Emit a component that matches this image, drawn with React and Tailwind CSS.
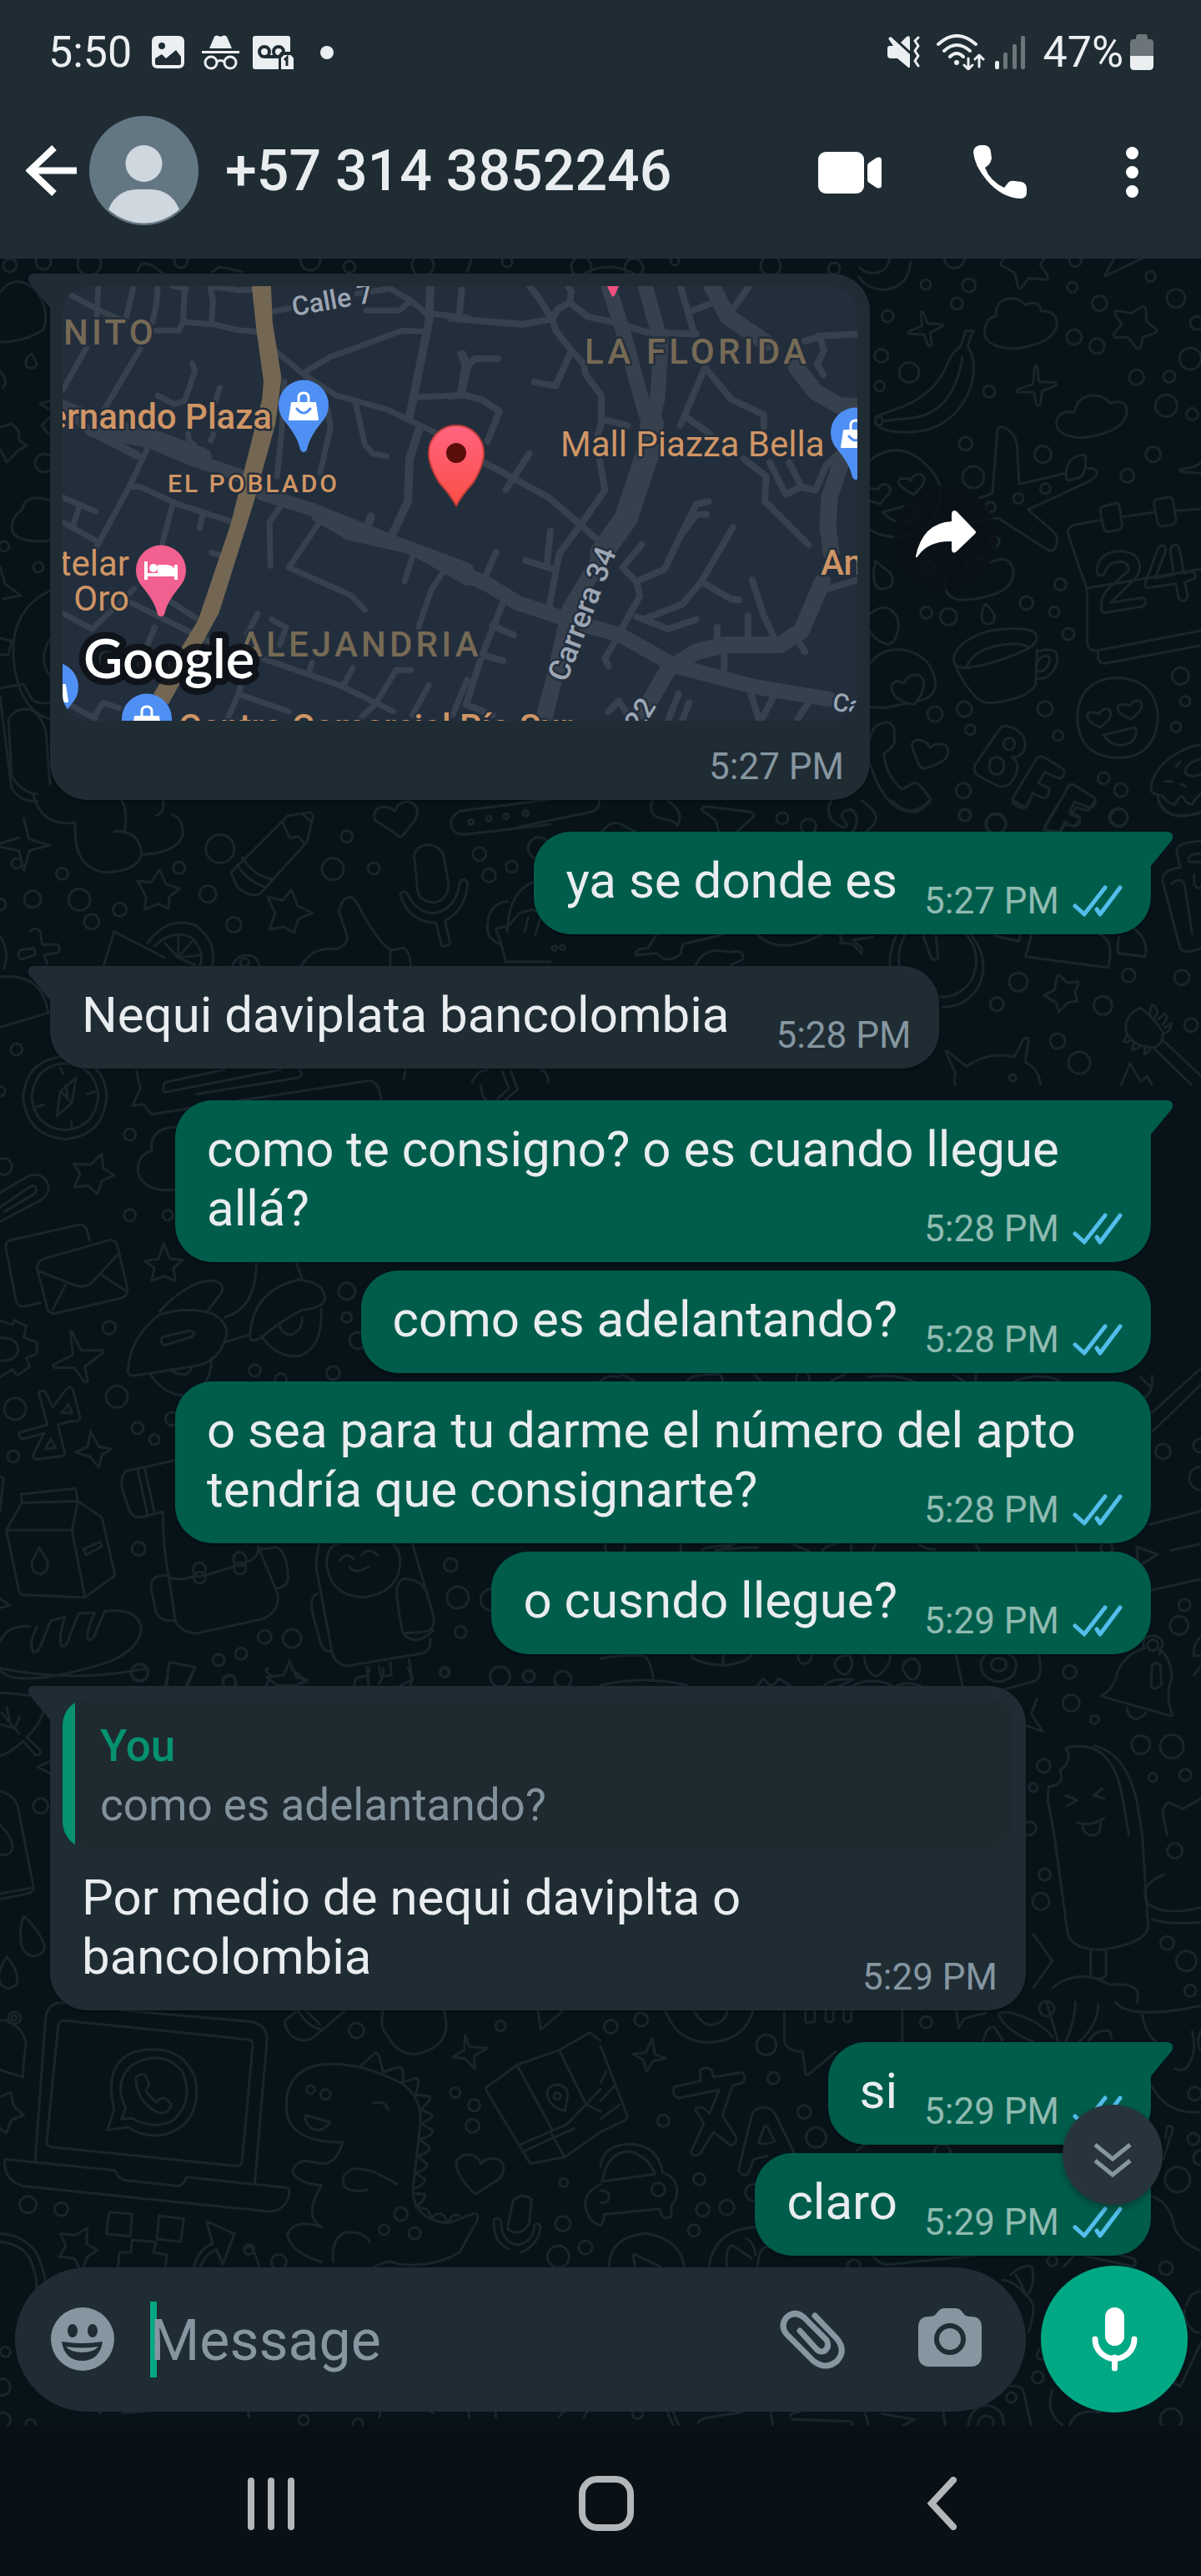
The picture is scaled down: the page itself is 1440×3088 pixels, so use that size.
import React, { useState } from "react";

// Doodles of the chat background, grouped by region of the wallpaper.
// Each region has its own origin and scale; dots are [x, y, radius].
const doodleRegions = [
    {
        ox: 1030, oy: 305, sx: 1 / 3, sy: 1 / 2.24,
        paths: [
            // shell
            "M0 60Q30 95 95 95Q180 85 185 20M0 35Q30 55 70 48Q105 40 110 10",
            // stars
            "M510 28L560 50L572 88Q578 94 585 88L610 64L670 68Q685 66 676 54L652 28L675 0M510 28Q505 20 540 0",
            "M920 160Q920 150 935 152L978 158L1018 140Q1032 138 1032 150L1034 180L1068 200Q1078 208 1062 212L1022 222L1012 248Q1005 258 996 250L966 222L922 224Q910 220 922 208L945 188Z",
            "M885 55L925 0M885 58L1020 10",
            // sparkles
            "M222 155Q230 150 236 165L246 185L300 188Q310 190 295 195L255 210L262 240Q258 250 248 244L234 215L180 213Q172 210 185 205L226 192Z",
            "M632 300Q638 292 642 305L646 342L705 344Q714 348 704 354L658 366L652 402Q644 410 638 402L628 370L572 370Q562 366 574 362L626 348Z",
            // clouds
            "M492 165Q490 118 550 118Q580 118 598 136Q645 120 656 152Q715 152 712 190Q700 240 560 253Q450 250 452 208Q455 170 492 165Z",
            "M775 424Q785 380 845 378Q885 380 902 400Q960 385 964 422Q955 480 800 492Q710 490 710 450Q715 418 775 424Z",
            "M378 848Q390 812 440 816Q460 818 468 828Q550 800 556 856Q550 920 370 928Q310 925 310 885Q320 845 378 848Z",
            // banana
            "M384 205H410L390 246Q430 290 400 360Q340 470 190 477Q90 480 60 455Q50 435 80 430L160 408Q280 370 320 290Q335 262 365 248ZM372 275Q340 430 180 440L82 447M60 447a12 12 0 1 0 24 0a12 12 0 1 0-24 0",
            // heart eyes face
            "M40 552Q130 500 220 550Q300 600 295 650Q280 740 160 758Q90 762 40 740M142 615Q140 600 160 602Q180 600 185 608Q200 585 225 592Q245 600 225 622L198 645Q160 632 142 615ZM40 628Q62 630 68 632Q80 610 105 620Q120 630 105 645L75 670L40 662M85 692L200 668Q215 670 212 690Q200 720 155 722Q110 715 85 692Z",
            "M785 1245Q790 1140 930 1137Q1070 1142 1075 1245Q1065 1350 930 1352Q790 1348 785 1245ZM820 1240Q822 1228 845 1230Q858 1232 862 1234Q880 1215 900 1222Q912 1235 895 1252L868 1270Q825 1258 820 1240ZM930 1220Q932 1208 952 1208Q970 1210 974 1212Q990 1192 1012 1200Q1025 1212 1008 1228L980 1248Q938 1238 930 1220ZM880 1290L990 1270Q998 1270 997 1285Q990 1315 940 1318Q900 1315 880 1290Z",
            // plane
            "M430 655L480 642L497 475Q500 460 520 464Q560 475 568 510L576 617L740 588M745 600Q740 560 775 545Q818 530 815 550Q818 590 790 600L760 606Q745 608 745 600ZM812 575Q860 570 855 592Q845 602 820 612L608 685L700 745Q720 765 710 780Q700 800 682 795L500 708L360 725",
            // drops
            "M58 825Q56 820 66 828L112 855Q130 875 112 892Q80 905 60 890Q46 870 58 825ZM455 938Q442 950 441 975Q445 995 468 992Q492 988 486 968Q478 955 455 938Z",
            // calendar
            "M1230 683L1140 688M1060 692L945 705M865 714L775 726Q745 735 752 752L820 900V1040Q825 1065 855 1064L1230 1010M860 1066V1085Q865 1100 885 1098L1230 1050M820 896L1230 845M868 690Q866 680 880 676L925 668Q938 670 938 682L946 724Q946 736 932 740L895 745Q882 744 880 734ZM1060 670Q1060 660 1075 657L1115 652Q1128 652 1130 664L1140 712Q1138 725 1124 726L1090 730Q1076 730 1074 718Z",
            "M855 850Q860 798 940 797Q1010 800 1010 840Q1010 860 980 880L905 935L1015 922Q1032 922 1030 935Q1028 944 1015 946L885 962Q870 962 872 945Q870 915 900 895L970 848Q970 825 935 825Q895 828 886 850Q880 865 868 862Q856 862 855 850ZM1075 790Q1085 778 1100 784Q1106 792 1100 802L1065 870L1132 860L1120 795Q1120 782 1135 780Q1150 780 1152 792L1170 856L1200 852Q1215 856 1208 870L1172 880L1182 915Q1180 930 1165 930Q1150 930 1148 918L1140 884L1040 895Q1024 895 1030 880Z",
            // cup
            "M340 1085Q350 1040 460 1012Q600 995 635 1018Q650 1040 610 1058Q500 1098 390 1110Q340 1112 340 1085ZM388 1106Q410 1060 520 1048Q590 1042 610 1056M345 1102Q370 1150 420 1188Q445 1210 500 1202Q610 1190 635 1155L640 1060M638 1070Q660 1058 700 1064Q725 1075 705 1110Q680 1145 636 1138M638 1112Q635 1085 668 1078Q690 1078 685 1095Q670 1122 645 1120Q636 1118 638 1112Z",
            // helmet with heart
            "M40 1098Q80 1055 160 1062Q260 1075 275 1150Q275 1190 215 1198M40 1215L90 1218L170 1206M118 1170Q112 1148 140 1146Q155 1148 160 1152Q180 1125 215 1130Q240 1140 230 1165Q222 1190 198 1208Q130 1200 118 1170ZM40 965Q80 940 110 952Q145 970 142 1000Q135 1040 105 1047Q60 1040 40 1012",
            // phone
            "M40 1300Q45 1260 100 1256Q125 1262 126 1275L128 1310Q120 1325 90 1340Q95 1400 155 1436L195 1420Q210 1418 222 1428L255 1460Q260 1470 240 1480Q220 1498 190 1497Q110 1495 60 1410L40 1370",
            "M192 1325Q185 1305 215 1303Q248 1308 256 1325Q275 1308 312 1318Q330 1335 310 1355Q290 1368 238 1380Q225 1382 215 1370Z",
            // lettering
            "M505 1275Q515 1262 540 1268Q600 1282 598 1320Q590 1350 550 1350Q580 1365 565 1395Q540 1435 500 1428L430 1400Q410 1390 416 1372ZM520 1314a20 16 0 1 0 40 0a20 16 0 1 0-40 0M470 1373a26 18 0 1 0 50 0a26 18 0 1 0-50 0",
            "M640 1352Q650 1345 665 1350L735 1382Q742 1390 735 1400Q725 1410 710 1404L668 1390L645 1420L682 1432Q688 1445 676 1456Q665 1462 650 1456L625 1446L605 1480Q590 1490 575 1484L555 1474Q548 1466 556 1456ZM755 1426Q762 1420 775 1425L845 1458Q855 1468 846 1478Q835 1488 822 1484L775 1470L758 1496L790 1508Q800 1518 790 1530Q780 1538 765 1534L740 1524L722 1550L665 1545Z",
            // donut
            "M1230 1315Q1120 1335 1070 1390Q1040 1430 1055 1445Q1080 1455 1090 1452Q1110 1475 1135 1478Q1155 1450 1165 1455Q1180 1480 1200 1475Q1210 1460 1230 1448M1075 1455Q1080 1495 1130 1505Q1180 1510 1230 1500M1230 1355Q1175 1365 1172 1390Q1190 1408 1230 1395M1140 1375L1155 1362M1100 1415L1125 1415M1158 1422L1175 1428",
            "M1230 560Q1200 575 1160 576Q1145 580 1165 584L1230 588",
        ],
        dots: [
            [240, 81, 6], [395, 83, 8], [352, 132, 7], [103, 166, 7], [80, 272, 8], [180, 317, 12], [74, 354, 6], [468, 368, 7], [383, 508, 8],
            [343, 10, 12], [778, 17, 7], [767, 88, 6], [865, 131, 9], [774, 222, 9], [856, 246, 9], [1049, 59, 6], [1140, 118, 11], [1215, 184, 8],
            [1192, 280, 13], [998, 330, 9], [1116, 328, 7], [1105, 406, 13], [1198, 429, 7], [1058, 537, 9], [965, 594, 8], [661, 537, 10],
            [411, 598, 13], [573, 655, 6], [670, 629, 6], [473, 678, 6], [487, 771, 6], [248, 842, 9], [242, 962, 7], [322, 973, 10], [602, 936, 8],
            [724, 886, 7], [702, 960, 6], [753, 1019, 7], [1156, 1132, 10], [1173, 1200, 6], [1140, 1269, 6], [273, 1234, 9], [379, 1221, 9],
            [400, 1276, 6], [669, 1220, 9], [716, 1292, 6], [375, 1440, 9], [381, 1505, 7], [491, 1530, 12], [880, 1406, 7], [942, 1438, 8], [933, 1512, 11],
        ],
    },
    {
        ox: 0, oy: 950, sx: 1 / 2.376, sy: 1 / 1.4385,
        paths: [
            "M95 5Q120 60 215 52M215 52Q205 130 300 138Q400 135 403 103Q395 65 325 67M355 67Q365 30 345 12M403 107Q500 105 520 75Q525 45 490 38M445 40Q470 35 465 15",
            "M68 45L82 80L142 91L84 100L68 135L54 100L0 94M0 88L54 78Z",
            // pencil
            "M658 138L820 40L885 34L892 40L875 85L740 175Q710 182 675 162ZM675 124Q700 150 752 163M690 112Q720 142 775 150M805 52L825 78L850 76L868 88M860 36L886 50",
            "M1068 48Q1060 25 1095 25Q1115 25 1125 32Q1140 10 1175 18Q1200 30 1180 50L1150 72Q1140 80 1130 72Z",
            "M1310 32L1568 12M1310 32Q1275 45 1288 62Q1300 74 1330 72L1568 55",
            // stars
            "M392 152L430 155L455 133L472 158L512 166L482 180L480 200L450 192L412 202L416 180Z",
            "M762 180L806 186L830 168L848 195L890 208L850 218L838 242L810 232L768 236L784 208Z",
            "M210 640L258 642L290 623L294 648L325 660L290 670L278 692L250 678L212 680L228 658Z",
            "M412 808L452 804L466 778L484 804L520 806L494 820L500 842L468 834L432 842L440 820Z",
            "M760 1525L808 1522L825 1498L845 1526L874 1530L840 1540H790Z",
            // microphone
            "M1180 110Q1185 90 1225 90Q1262 95 1266 115L1278 160Q1275 185 1238 190Q1195 188 1190 170ZM1140 175Q1155 165 1165 180Q1190 208 1240 208Q1300 200 1310 155Q1320 145 1332 155Q1330 200 1268 222L1282 260Q1270 268 1258 264L1242 225Q1160 222 1140 175Z",
            // thumb
            "M860 298Q890 265 960 270Q990 262 990 250L965 205Q975 180 1000 180Q1015 185 1030 205Q1080 260 1115 272L1150 268Q1168 275 1170 298M1112 272V298",
            // whisk and citrus
            "M85 240Q100 230 115 240L120 262L165 262Q175 270 165 276L125 280L135 295M100 280L60 288Q45 280 58 272L98 268ZM325 240L295 300M325 240L470 285M420 260Q480 210 560 230Q620 260 605 298M440 265Q490 235 545 250Q585 275 570 298M508 285V245M508 285L545 258M508 285L572 280M508 285L470 260M508 285L555 297",
            "M0 248Q30 275 10 305M0 318Q120 310 138 380L0 405M662 298Q680 275 720 282Q738 290 738 298M1390 220Q1400 190 1445 188M1445 240Q1450 150 1568 150M1412 235L1448 230L1480 208L1515 202L1568 215M1412 235Q1430 260 1440 292H1568M1495 240L1505 215M1525 245L1540 215M1390 225Q1380 250 1425 262",
            // compass
            "M66 525Q75 460 185 455Q300 462 304 525Q295 592 185 598Q75 592 66 525ZM90 525Q100 470 185 467Q275 472 280 525Q270 578 185 582Q100 578 90 525ZM216 492L205 535L162 558L172 515ZM172 515L205 535M172 475L180 485M270 516L248 520M205 580L203 568M105 542L125 538M188 505L192 525",
            // notes
            "M378 540L400 510L388 480M378 540L410 538L430 555L1050 497Q1080 497 1086 530M470 500L640 478M470 517L800 478M470 500Q460 512 470 517M850 478Q870 485 850 492L560 520M1150 495L1155 480M1345 500Q1360 478 1390 478M1562 500Q1560 480 1540 478M1370 505Q1372 525 1385 530M1430 480L1450 510L1418 528M1455 480L1475 512L1440 530",
            "M498 577Q425 580 432 618Q390 625 393 655Q410 690 498 685M0 690L85 660Q130 655 138 680Q140 695 110 705L0 740M0 715L85 680Q100 675 104 684Q100 692 90 695L15 722",
            // envelopes
            "M255 772L248 755Q240 742 220 746L30 772Q12 775 18 790L45 875Q50 888 70 886L115 880M105 820Q108 808 125 804L310 772Q330 770 336 785L363 855Q365 868 345 872L160 898Q140 900 135 890ZM108 825L215 850Q240 855 260 846L338 795M150 892L188 848M360 860L290 832",
            // saucer
            "M455 895Q530 845 600 842Q640 842 632 862L590 895M365 995Q370 940 455 900Q540 885 610 900Q660 920 640 945Q620 985 545 990L390 1005Q360 1008 365 995ZM460 945Q455 940 470 938L540 928Q560 930 548 938L475 952Q460 955 460 945ZM730 812Q730 890 640 905M712 940Q715 860 850 840Q930 845 925 875Q915 890 860 892Q790 915 745 940Q712 950 712 940ZM860 838L845 812M745 938Q790 975 850 972Q920 960 915 890M795 915Q800 935 830 935Q865 925 860 905M640 948L710 935M430 1005Q470 1040 530 1040Q605 1025 602 975M485 995Q500 1005 530 1003Q550 995 545 990",
            // gear
            "M0 910L35 918L42 910L75 920L68 940L105 948V968L75 975L85 990L50 1005L35 995L0 1008M0 940Q50 940 52 960Q50 980 0 980",
            "M200 930Q205 925 212 940L232 962L290 962Q300 965 285 970L242 990L250 1015Q245 1020 235 1012L212 992L155 992Q145 988 158 985L208 970Z",
            "M258 1102Q265 1110 282 1128L318 1132L290 1142L282 1164L256 1145L215 1138L250 1128Z",
            // letters
            "M110 1035Q120 1028 130 1035L150 1060L190 1028Q200 1022 208 1030L228 1078Q225 1086 205 1084L165 1090L185 1140Q180 1145 165 1145L100 1150Q90 1145 98 1138L125 1105L65 1115Q50 1110 55 1104L135 1090ZM175 1070L195 1055L205 1070ZM128 1132L145 1115L158 1130Z",
            // milk
            "M60 1210L215 1200L222 1222L62 1225ZM62 1225L18 1272L205 1272L222 1222L290 1250L328 1350L242 1388L205 1272M18 1272L55 1380Q60 1385 75 1384L242 1388M112 1302L135 1325Q140 1345 115 1348Q85 1345 92 1325ZM238 1305L285 1292L290 1300L245 1315ZM0 1180L10 1182L0 1240",
            // backpack
            "M498 1152L360 1170Q340 1180 350 1205L370 1240Q380 1250 400 1250L465 1240M392 1168L420 1245M412 1165L440 1242M465 1240Q462 1290 480 1350L500 1430Q520 1450 560 1450L750 1425Q800 1410 790 1380L735 1300M472 1350Q500 1362 550 1352M585 1350L665 1335M700 1328Q740 1320 735 1300M550 1340a18 12 0 1 0 36 0a18 12 0 1 0-36 0M552 1354a17 10 0 1 0 34 0a17 10 0 1 0-34 0M665 1322a18 12 0 1 0 36 0a18 12 0 1 0-36 0M667 1338a17 10 0 1 0 34 0a17 10 0 1 0-34 0M472 1350Q430 1350 430 1370L445 1415Q460 1430 495 1428M740 1305L790 1302Q815 1310 820 1345Q825 1370 790 1372",
            // astronaut
            "M910 1296Q895 1330 905 1350L945 1480Q955 1505 990 1506L1200 1485Q1230 1480 1225 1460M930 1325Q935 1300 960 1296M930 1325Q935 1385 1035 1388Q1140 1380 1140 1325Q1138 1305 1120 1296M968 1325Q985 1308 1008 1322M1030 1315Q1050 1300 1075 1315M995 1335Q1010 1350 1050 1335M905 1382Q880 1385 892 1420L915 1470Q930 1485 945 1480M1175 1296L1235 1420Q1242 1445 1210 1447L1150 1450Q1140 1440 1130 1380Q1130 1355 1160 1356Q1200 1360 1205 1370M1150 1450Q1180 1475 1235 1445M1045 1508L1050 1540M1080 1508L1085 1525L1115 1522L1112 1500M1165 1495L1175 1530L1140 1540",
            // bread
            "M0 1465Q20 1435 85 1438M105 1438Q80 1470 95 1482Q110 1485 120 1465L145 1428M145 1428L185 1422M185 1422Q165 1460 175 1472Q190 1475 200 1452L225 1415H270Q245 1445 250 1460Q265 1465 275 1445L298 1412Q400 1405 402 1445Q390 1490 250 1510Q100 1535 30 1525L0 1515M482 1500L475 1540M482 1500L555 1508L530 1540M0 1390L28 1402L0 1406",
        ],
        dots: [
            [177, 140, 7], [93, 184, 10], [0, 193, 7], [226, 185, 13], [261, 223, 9], [341, 202, 8], [510, 130, 7], [627, 97, 17], [592, 175, 10], [666, 228, 9],
            [948, 132, 13], [988, 76, 7], [1065, 131, 7], [1366, 106, 8], [1393, 143, 8], [1458, 128, 7], [1342, 51, 3], [1392, 45, 3], [1442, 41, 3], [1496, 36, 3],
            [47, 443, 7], [0, 515, 6], [370, 590, 7], [10, 645, 10], [370, 729, 7], [478, 729, 6], [311, 923, 8], [988, 860, 10], [988, 905, 6], [1020, 945, 10],
            [43, 1063, 13], [333, 1042, 13], [38, 1145, 7], [392, 1096, 7], [440, 1116, 6], [726, 997, 7], [949, 1001, 8], [490, 1080, 8], [800, 1012, 7],
            [395, 1304, 8], [1284, 1332, 8], [1304, 1388, 13], [1400, 1392, 13], [1312, 1448, 7], [754, 1456, 8], [832, 1459, 11], [687, 1485, 7], [623, 1496, 7], [398, 1517, 10],
            [654, 1535, 8], [1267, 1517, 6], [1424, 1525, 12], [1507, 1524, 7], [697, 293, 5],
        ],
    },
    {
        ox: 0, oy: 2000, sx: 1 / 2.178, sy: 1 / 2.24,
        paths: [
            "M0 0Q200 40 380 0M440 0L432 45M510 0L490 45M700 0Q685 0 708 20L695 45M760 0L802 35L770 45M965 0L960 20L930 25L925 45M1065 0Q1080 20 1072 45M1000 0Q1005 20 990 40",
            // leaf
            "M0 65L75 72M115 95Q115 140 70 185L105 220Q108 235 92 232L60 195Q30 225 0 235M5 120L50 175M18 105L25 140M52 130L38 160M0 150L35 160M130 250L98 264L130 282",
            "M0 330Q45 340 50 390L88 590Q88 600 75 604L0 620M80 590L0 605M0 420Q40 460 30 490Q20 505 0 500",
            "M62 665Q50 690 55 740Q65 775 95 772Q120 765 115 740Q100 700 62 665ZM18 775Q-10 815 0 845Q20 870 42 850Q55 820 18 775Z",
            // bell
            "M0 945H30M20 948Q65 970 68 1010Q60 1060 60 1098L0 1078M22 938a16 16 0 1 0 32 0a16 16 0 1 0-32 0",
            "M0 1150L28 1138L36 1175L62 1200L30 1212L16 1248L0 1235",
            // laptop
            "M118 950Q120 895 165 898L340 920L650 948Q700 955 697 1000L665 1385M118 950L92 1322M152 960Q155 945 170 946L645 996Q662 998 660 1012L632 1325Q630 1338 615 1336L135 1285Q120 1282 122 1270ZM15 1318L300 1348Q308 1370 325 1374L465 1390Q480 1388 486 1366L752 1395Q760 1400 752 1425Q735 1460 700 1458L60 1390Q10 1375 12 1322Z",
            "M280 1240L298 1185Q270 1060 350 1030Q470 1000 510 1100Q530 1220 430 1252Q380 1262 335 1232ZM317 1210L328 1180Q295 1110 345 1065Q420 1020 475 1080Q510 1160 450 1215Q400 1240 345 1208ZM355 1100Q365 1085 380 1092L390 1120Q380 1130 382 1138L408 1165Q420 1150 432 1155L448 1170Q440 1200 410 1192Q355 1160 355 1100Z",
            // dinosaur
            "M895 1272Q880 1330 840 1330L800 1322Q765 1325 765 1355Q785 1385 840 1388Q790 1470 840 1500M895 1272Q780 1275 752 1210Q730 1090 830 1065Q930 1050 1050 1115Q1100 1150 1098 1220L1078 1400Q1080 1480 1170 1490L1235 1465Q1255 1460 1245 1485L1200 1568M798 1200L862 1218Q845 1245 820 1238Q795 1225 798 1200ZM975 1168Q1005 1158 1014 1185M1037 1385Q960 1335 920 1345Q885 1360 900 1392Q925 1410 960 1400",
            "M942 1068L980 1032Q990 1028 1000 1085L1040 1070Q1060 1075 1050 1112L1085 1100Q1100 1100 1085 1145L1120 1148Q1130 1155 1098 1185L1128 1198Q1130 1210 1098 1222L1130 1240Q1132 1255 1095 1265L1122 1285Q1122 1300 1090 1310L1115 1330Q1115 1345 1085 1355L1110 1372Q1110 1385 1082 1398M1082 1410L1110 1412Q1110 1430 1085 1445L1115 1452L1128 1475Q1145 1455 1160 1470L1170 1490Q1180 1460 1200 1470",
            "M840 1500Q770 1475 750 1520Q760 1570 840 1594M870 1594Q865 1530 900 1515Q950 1510 965 1540",
            "M745 945Q740 960 760 985Q790 1010 820 990L900 920M780 920Q800 960 840 970M800 920L835 955M745 945L775 920M1000 920Q990 970 1015 990Q1040 1040 1090 1035Q1170 1015 1165 950L1160 920",
            "M1215 985L1225 1015L1272 1020L1238 1040L1240 1075L1215 1048L1182 1044L1212 1025Z",
            "M1195 1350Q1180 1310 1225 1305Q1250 1310 1256 1330Q1275 1308 1305 1320Q1325 1340 1305 1370L1242 1412Q1215 1390 1195 1350Z",
            // map
            "M1350 1065L1270 1125Q1268 1130 1272 1138L1385 1330L1475 1312L1568 1245M1350 1065L1460 1025L1540 978L1568 1000M1460 1025L1530 1170M1350 1065L1440 1235M1355 1280L1480 1225L1568 1130M1365 1298L1500 1235M1440 1250L1475 1312M1430 1150Q1425 1120 1455 1118Q1485 1122 1482 1150L1475 1188Q1440 1180 1430 1150ZM1530 1170L1568 1190M1405 920L1412 970L1470 920M1568 1385Q1520 1410 1530 1450Q1540 1490 1568 1495",
            // microphone
            "M1340 1430Q1360 1405 1388 1425L1382 1490Q1360 1530 1325 1505ZM1290 1480Q1300 1470 1308 1485Q1310 1540 1350 1548Q1395 1540 1395 1495Q1405 1485 1412 1500Q1405 1550 1360 1568M1290 1480Q1285 1540 1330 1560",
            // squares and arrow
            "M285 1460L345 1465L340 1525L278 1518ZM415 1470L480 1478L472 1540L410 1532ZM345 1535L408 1540L400 1568L435 1575L430 1640H305L312 1568H342ZM500 1640Q510 1560 555 1545L540 1485L612 1518L582 1600L565 1560Q520 1580 520 1640M640 1560Q650 1545 660 1560Q680 1600 678 1640",
            "M158 1518L195 1522L228 1503L226 1545L254 1562L228 1580L212 1620L195 1585L155 1580L172 1550Z",
            "M0 1518Q60 1520 95 1568Q130 1650 115 1690M0 1540Q60 1545 80 1590Q105 1650 90 1700",
            "M960 1620Q1010 1580 1040 1600Q1130 1610 1200 1568",
            "M260 2000Q270 1985 300 1980L580 1955Q605 1962 590 1975L320 2000M640 1950L650 2010M990 2010L1005 1950M1030 1970L1045 1950M1055 1980L1068 1950M1085 1985L1100 1965L1130 2000M1215 1950L1225 2010M1290 1950L1295 2010M1490 1950L1495 1970L1460 2010M1495 1955L1545 1975L1525 2010",
        ],
        dots: [
            [365, 12, 10], [599, 35, 8], [1161, 11, 5], [1306, 22, 12], [1380, 21, 7], [1470, 30, 10], [106, 369, 9], [931, 972, 9], [1307, 960, 6],
            [811, 1131, 5], [850, 1144, 6], [1189, 1139, 6], [1238, 1173, 7], [1234, 1228, 8], [73, 1440, 10], [160, 1452, 8], [1047, 1465, 8],
            [1003, 1507, 6], [1083, 1517, 7], [1472, 1381, 5], [1470, 1491, 9], [1529, 1555, 8], [1458, 1580, 13], [728, 1594, 9], [650, 1560, 6],
            [14, 1835, 6], [5, 1930, 10], [8, 2018, 9], [80, 2030, 6], [793, 2018, 6], [935, 2028, 6], [1455, 1148, 4], [37, 938, 3],
        ],
    },
    {
        ox: 720, oy: 2400, sx: 1 / 2.178, sy: 1 / 2.279,
        paths: [
            "M170 25Q200 110 285 110Q375 105 398 25M245 25Q265 65 295 62Q330 50 330 25",
            "M480 25V110Q490 135 528 135L535 195Q538 202 545 196L615 135M788 25V110M535 25V50Q535 58 548 56Q560 56 560 50V25M588 25V50Q598 60 608 50V25M635 25V50Q645 60 655 50V25",
            "M135 100L142 142L172 154L138 160L120 190L112 158L84 142L118 138Z",
            // translate glyphs
            "M260 185Q275 175 290 185L295 205L370 192Q382 205 372 220L345 228L318 310L355 370Q355 390 340 392L295 355L260 415Q240 425 236 410L270 330L248 295Q250 285 268 288L285 305L310 240L205 262Q185 255 192 232L262 215ZM360 460L395 310Q405 285 430 288Q450 290 458 310L505 410M360 460Q370 478 385 470L400 430L435 420M412 385L428 340Q436 335 440 350L455 380Q430 392 412 385Z",
            // lamp
            "M0 120L70 310Q70 320 60 325L0 355M15 190L0 220M35 230L0 270M50 280L0 320",
            // car
            "M0 450Q5 390 75 388Q150 390 162 465Q200 480 200 515Q200 540 185 555V585Q160 600 155 565L10 580Q10 600 0 610M5 490Q15 410 75 408Q125 420 142 470ZM0 515Q25 515 22 535Q20 550 0 548",
            // plant
            "M930 25L935 72L950 45L1005 30M1040 35Q1045 20 1090 35Q1150 55 1180 95M1040 35Q1060 80 1130 108M1165 0L1195 108M1240 0Q1240 50 1215 108M1300 5Q1300 60 1250 108M1000 105Q1010 60 1030 70L1050 105M1275 105Q1300 70 1330 80L1335 100",
            "M1345 0Q1380 50 1568 10M1415 35Q1420 80 1450 108M1568 80Q1555 110 1565 130M1545 80Q1560 140 1530 180Q1520 190 1500 182M1440 230Q1480 310 1568 300M1475 370L1480 340Q1490 335 1495 345L1470 430M1440 530Q1490 550 1500 620Q1520 660 1568 680",
            "M22 722Q25 640 120 632Q210 650 218 722M85 690Q90 688 100 695L155 722M85 690L90 722M283 722Q300 620 405 615M330 722Q325 670 345 665L395 700M410 722Q415 650 455 675M380 645Q400 655 405 690M670 405L690 390M710 690Q720 710 745 718L980 692M1250 690L1390 722Q1405 715 1390 700L1350 690M1210 722L1240 690",
            // shell by the field
            "M1070 745Q1110 710 1128 725Q1135 790 1110 800M1085 745Q1100 770 1110 800M1050 760Q1080 760 1110 800Q1135 820 1130 850Q1125 880 1118 900M1530 830Q1540 790 1568 790M1525 840Q1520 870 1550 900L1568 905M1568 930L1515 1050L1495 1040M1145 950Q1130 980 1160 975",
            "M255 1150Q260 1140 280 1135L370 1120M450 1155L445 1120M495 1130Q500 1120 520 1120M500 1140L650 1145Q665 1150 655 1158M700 1155L690 1120M735 1125L820 1140L790 1158M900 1155L895 1120M960 1155Q970 1100 1010 1102Q1055 1110 1052 1155M985 1155Q990 1130 1008 1130Q1030 1135 1025 1155M1070 1050Q1100 1045 1105 1065L1125 1158M1180 1060Q1160 1120 1205 1155M1225 1155Q1240 1110 1305 1120M175 1120L190 1158M190 1120L205 1158",
        ],
        dots: [
            [27, 67, 8], [106, 48, 8], [850, 55, 7], [433, 117, 12], [451, 208, 7], [532, 300, 8], [563, 370, 12], [164, 324, 7], [151, 512, 8], [258, 484, 7],
            [267, 567, 8], [330, 561, 9], [244, 624, 7], [1552, 250, 8], [1507, 485, 15], [1548, 374, 7], [1568, 425, 9], [1180, 707, 6], [1477, 727, 8],
            [1142, 1025, 7], [1073, 1080, 6], [1490, 1140, 13], [97, 1125, 6], [893, 412, 10], [662, 722, 8], [400, 520, 10],
        ],
    },
    {
        ox: 720, oy: 1640, sx: 1 / 2.178, sy: 1 / 2.8,
        paths: [
            "M0 975Q60 960 110 965Q130 970 138 1045M0 1065Q110 1030 225 1065M235 960Q240 990 320 998Q385 990 395 960M320 960V998M410 1065L425 1042L440 1062Q455 1070 465 1042L495 1065M585 1065Q600 1040 660 1045L620 1070M660 1065Q710 1035 760 1065M775 1065Q800 1050 835 1065M612 990Q620 960 650 965Q668 1000 640 1030Q612 1020 612 990ZM688 960Q690 1020 720 1035Q755 1010 758 960M788 1005Q795 975 820 975Q845 1000 825 1040Q805 1060 788 1005Z",
            "M928 960L945 1065M1145 960Q1155 1040 1135 1050L1050 1080M993 995Q995 955 1040 950Q1085 960 1086 995Q1085 1045 1040 1053Q995 1045 993 995ZM1020 995a20 22 0 1 0 40 0a20 22 0 1 0-40 0",
            // bell
            "M1308 1100Q1340 1080 1350 1020Q1370 960 1420 940M1310 1102L1490 1168Q1495 1165 1490 1150Q1475 1100 1492 1040Q1490 970 1460 945M1420 940Q1410 900 1445 898Q1480 910 1462 945L1460 962M1428 930a12 16 0 1 0 28 0a12 16 0 1 0-28 0M1440 1000Q1450 980 1462 998L1465 1060Q1450 1085 1438 1070ZM1375 1140Q1378 1175 1400 1178Q1420 1170 1425 1155",
            "M1568 0Q1500 80 1440 150M1568 55L1440 215M1440 25Q1445 80 1420 100M1410 30L1438 66M1568 480L1435 525M1568 708L1440 745M1490 612L1568 590M1400 600L1455 625L1405 665Z",
            "M1568 900Q1545 930 1550 965H1568M1568 1000L1550 1030M1140 1110L1125 1160L1155 1220L1112 1200",
            // popsicle
            "M1215 1275Q1330 1240 1360 1420L1380 1568M1290 1268Q1370 1290 1400 1450L1415 1568M1215 1275Q1235 1320 1200 1350Q1215 1400 1170 1405L1168 1450L1185 1568M1215 1435L1245 1450L1218 1470M1310 1412L1288 1435L1315 1445M1245 1525Q1285 1540 1315 1510M1258 1530Q1260 1568 1285 1568Q1310 1568 1305 1520M1568 1445L1520 1480L1485 1458Q1465 1470 1470 1510L1480 1568",
            "M1185 1568L1220 1900Q1240 1960 1320 1950Q1420 1930 1430 1880L1415 1568M1280 1955V2040Q1300 2060 1320 2040V1950",
            // cat and cloud
            "M1470 1700Q1400 1740 1430 1800Q1480 1840 1568 1810M1440 1850Q1480 1870 1568 1860M1180 2080Q1250 2010 1330 2070Q1420 2060 1400 2130M1130 1900L1180 1990L1130 2080",
            "M0 45Q15 20 50 30M45 15Q70 30 90 45M225 45Q230 20 310 20Q320 30 318 45M400 20L420 45M640 20Q620 30 600 45M700 30Q760 15 820 45M920 20L950 45M980 20V45M1080 45Q1150 10 1200 45M210 590V615M265 612Q265 600 350 592L300 615M300 612Q380 600 410 602M500 590L545 615M580 612Q590 592 620 590M655 590V612M720 590L710 612M830 590Q850 610 875 608M980 590L990 615M1240 590L1245 615",
        ],
        dots: [
            [1469, 280, 9], [1565, 260, 8], [1568, 370, 14], [1525, 795, 7], [1511, 864, 11], [1225, 1020, 8], [1229, 1124, 10], [1290, 1180, 5], [1411, 1264, 11],
            [1492, 1270, 14], [1527, 1366, 7], [1442, 1374, 5], [1157, 1335, 8], [1130, 1408, 5], [1120, 1545, 8], [533, 970, 8], [528, 35, 8], [38, 600, 12], [1322, 605, 7],
            [1500, 1620, 9], [1160, 1700, 7], [1150, 1790, 10], [1480, 1930, 8], [1530, 1990, 12], [1165, 2150, 9], [1540, 2090, 7],
        ],
    },
    {
        ox: 620, oy: 960, sx: 1 / 1.912, sy: 1 / 3,
        paths: [
            "M0 95L170 40Q190 30 188 0M310 0Q295 60 345 68Q365 75 368 90Q385 40 345 0M422 30Q425 18 440 22L535 40Q548 50 540 60L505 110M422 30L455 70L462 110M195 110Q215 70 235 82L270 110M720 0Q700 60 745 95Q760 95 755 80Q730 40 765 30Q790 60 770 110M790 0Q850 60 800 110M860 0Q900 70 945 0M1140 0L1165 25L1175 0M1245 0L1210 90Q1208 110 1230 110M1325 0L1310 35L1280 25L1270 50L1290 60L1280 90L1255 85L1245 110M1470 0Q1490 60 1530 55L1568 40",
            "M1568 145Q1510 150 1512 180L1520 240Q1475 250 1480 290L1520 530Q1530 555 1568 530M1500 300Q1520 270 1530 300L1548 480M1568 190Q1535 190 1540 220H1568M1552 265V300Q1560 320 1568 310",
            "M320 480L300 530Q270 530 272 555L320 548Q345 590 375 550L380 515L470 482M410 590Q430 520 490 545Q520 530 518 570L490 590M550 480Q600 560 700 480M740 510L770 515L790 550V530L770 500L815 490M740 480L745 505",
            // stopwatch
            "M870 480Q835 600 880 700M890 480Q855 590 900 660M1040 480Q1085 570 1060 660Q1035 740 975 742M1030 480Q1070 560 1040 650Q1010 710 970 705M930 480L948 560Q955 580 965 565L960 480M1095 485L1150 505L1155 480M1180 480L1165 560L1355 600Q1370 500 1335 480M1380 490Q1375 520 1378 548L1440 560Q1448 500 1415 460",
            "M1238 630Q1245 625 1252 640L1260 655L1285 650Q1290 660 1278 685L1285 720L1262 725L1242 760L1235 725L1208 700L1232 680Z",
            // guitar
            "M1430 745Q1400 760 1395 810Q1395 880 1460 888Q1485 870 1480 830Q1460 780 1430 745ZM1480 860L1568 990M1460 890L1545 1020M1450 765L1455 735Q1465 735 1468 760L1460 785M1470 785L1485 765Q1495 780 1480 805M1485 815L1500 800Q1498 830 1485 835M1400 840L1390 865Q1400 875 1410 855M1415 870L1410 895Q1420 895 1430 880M1440 885L1438 910Q1448 905 1452 890",
            // robot
            "M1030 955L990 905Q980 890 985 910L1005 980Q1000 1010 1005 1020M1030 955Q1080 900 1140 920L1160 860Q1175 840 1172 865L1165 940Q1195 960 1200 1020M1385 1020L1405 945L1430 1010L1445 990L1455 1020",
        ],
        dots: [
            [20, 45, 3], [608, 63, 7], [668, 92, 9], [1026, 52, 7], [1098, 82, 12], [1380, 60, 10], [86, 530, 3], [104, 527, 3], [1149, 652, 11], [1402, 628, 8],
            [1524, 635, 9], [1343, 736, 11], [1100, 731, 8], [1239, 864, 9], [1289, 942, 13], [1545, 806, 8], [1136, 996, 4], [50, 170, 13],
        ],
    },
];

const strayDots = [
    [12, 318, 8], [52, 314, 9], [107, 316, 14], [217, 313, 8], [372, 312, 12], [419, 320, 7], [507, 318, 13], [608, 314, 6], [697, 320, 12],
    [760, 321, 11], [809, 313, 5], [924, 319, 12], [1000, 322, 7], [53, 555, 11], [46, 680, 6], [5, 655, 6], [20, 1035, 6],
];

const strayPaths = [
    "M0 350Q20 325 45 350Q60 375 52 395Q30 410 0 410",
    "M38 424Q28 430 32 440Q42 444 44 436ZM0 445Q10 455 4 465",
    "M0 512L14 508L22 516L23 528L32 534L22 540L8 554L0 538M60 480L48 484L58 490M60 500L50 510L58 520",
    "M60 600Q30 590 26 612Q10 622 16 640Q30 652 60 648",
    "M0 680L6 700L25 714L4 718M60 708Q14 730 16 785Q20 850 60 862M60 766Q45 790 60 810M0 765L14 768L10 785H0M0 825L28 820L38 838Q44 845 60 842M0 835Q8 900 14 945Q25 962 45 960M10 862Q22 845 40 852Q56 865 56 890L60 940M10 862L14 930Q25 950 45 952",
    "M165 325Q170 305 195 328M255 326L262 320L275 322L290 326M560 326L565 312M700 328Q730 312 760 328",
];

function Wallpaper() {
    return (
        <svg
            aria-hidden="true"
            viewBox="0 310 1440 2598"
            preserveAspectRatio="xMidYMin slice"
            className="absolute inset-0 -z-10 h-full w-full"
            fill="none"
            stroke="#18262c"
            strokeWidth="3"
            strokeLinecap="round"
            strokeLinejoin="round"
        >
            {doodleRegions.map((region) => (
                <g key={`${region.ox}-${region.oy}`}>
                    <g transform={`translate(${region.ox} ${region.oy}) scale(${region.sx} ${region.sy})`}>
                        {region.paths.map((d, i) => (
                            <path key={i} d={d} vectorEffect="non-scaling-stroke" />
                        ))}
                    </g>
                    {region.dots.map(([x, y, r], i) => (
                        <circle key={i} cx={region.ox + x * region.sx} cy={region.oy + y * region.sy} r={r} />
                    ))}
                </g>
            ))}
            {strayPaths.map((d, i) => <path key={i} d={d} />)}
            {strayDots.map(([x, y, r], i) => <circle key={i} cx={x} cy={y} r={r} />)}
        </svg>
    );
}

/* ---------- Map ---------- */

const westRoads = [
    "M230 100L340 150L420 180M330 78L325 160M448 78L440 110L425 165M530 78L525 130L512 180",
    "M620 78L615 180L600 205L525 205M580 78L625 85M615 180L720 188L800 204L860 208M705 78L715 120L710 185M705 78L800 90L860 88M915 150L970 142",
    "M290 255L210 375M470 258L350 430M530 390L585 415L620 405L655 320L645 298M738 368L722 410M708 518L716 500M632 500Q630 520 650 530M210 410L300 440",
    "M495 540L440 640L325 820M440 650L470 650L600 700L780 750M580 700L545 810M210 680L320 720M265 710L245 760M210 750L325 805M680 730L670 768M710 838L740 845",
    "M440 980L700 1090M210 1010L310 1055L450 940M560 970L660 1025M520 1050L490 1110",
    "M920 260L1020 330L1130 390L1300 430L1460 495M1020 325L1110 280L1350 205L1425 208M1230 148H1340L1380 120L1310 85L1200 100M1380 120L1430 155L1568 168",
    "M1390 395L1568 388M1195 415L1225 530L1250 555L1298 563M1100 430L1110 480L1075 610M955 350L945 500L930 620M1550 90L1545 155M1545 270L1560 300L1545 380",
    "M950 695L905 750L908 875M1085 735L970 880L1180 960L1225 1000M1385 850L1358 920M1490 890L1450 940L1405 1050",
    "M865 1012L830 1070M912 1028L960 1050L940 1100M885 1140L1140 1215L1320 1290M1048 1150L1035 1185M1185 1165L1150 1220",
    "M1215 1305L1260 1270L1330 1172L1380 1172M1440 1215L1385 1300M800 1240L970 1290M800 1240L765 1310M815 1200L800 1240M210 1260L320 1310M320 1300L345 1265L400 1280M1568 1200L1520 1300",
];

const westAvenues = [
    "M1445 78L1440 180L1375 450M1410 480L1375 570L1370 690L1310 800",
    "M220 430L300 490L460 560M1060 735L1170 790L1380 830L1568 920M1245 735L1225 790",
];

const eastRoads = [
    "M0 170L205 187L290 172L305 145L340 125L345 95L335 78M32 90L25 165M225 78L250 110L290 172L300 205L345 262L380 300L385 330L430 390V470L420 500",
    "M340 125L390 165L480 185L560 210L700 215M345 262L300 362L240 352M35 270L50 305L70 285L135 285M50 305L35 378M0 392L35 388L90 402L140 435L105 520M440 460L505 475",
    "M425 570L440 660L370 760L310 840L280 1000M95 580L280 680L430 810M225 555L158 658M285 775L275 870M215 860L295 885",
    "M655 78L695 215M685 150L750 125M850 80L800 150M1010 235L1060 220L1159 215M1050 220L1065 260L1045 300L1062 330",
    "M725 310L670 440L655 475M725 310L800 400L893 445V480M670 450L740 500M835 570L900 620L895 690L1020 815",
    "M910 580L955 672L1000 650L1040 660L1070 590L1100 560M965 580L1000 650M1159 915L1060 945",
    "M130 835L100 905M150 980L90 1130L45 1270M120 1045L180 1072M95 1130L150 1145M45 1270L120 1300",
    "M545 815L490 880L530 920L540 960L480 1070L440 1140L450 1160M540 915L610 885L655 790L700 700L735 692M655 790L700 730L730 728",
    "M530 1020L620 1055L700 1028M555 1025L660 985L715 920L805 765M715 920L800 970L822 972",
    "M860 915L890 1010L925 1085M848 1018V1080M760 1050V1080M780 1110V1190M985 1080L1010 1120",
    "M850 1220L880 1316M930 1230L885 1316M1030 1250L990 1310M650 1240L620 1316M680 1265L660 1316M450 1290L480 1260L500 1290",
];

const eastAvenues = [
    "M450 78L490 200L550 420L570 480M555 78L600 240L590 400L570 480",
    "M0 880L110 930L190 980L310 1020M385 1045L480 1070L640 1160L870 1220L1080 1255",
];

const eastHighways = [
    "M745 78L790 165L900 240M985 310L1040 380L1110 420H1159",
    "M1120 560L1080 680L1075 760L1085 840M1060 920L1000 1060L940 1100H780L700 1120L620 1170L580 1240L550 1290",
    "M570 460V560L500 740L430 850L340 1000L300 1180L265 1316",
];

function Roads({ paths, width }) {
    return paths.map((d, i) => (
        <path key={i} d={d} strokeWidth={width} vectorEffect="non-scaling-stroke" />
    ));
}

function ShopPin({ x, y }) {
    return (
        <g transform={`translate(${x} ${y})`}>
            <path d="M0 57Q-4 57 -5 50Q-8 38 -21 22A30 30 0 1 1 21 22Q8 38 5 50Q4 57 0 57Z" fill="#4f90f5" />
            <path d="M-14 -2H14L17 18H-17Z" fill="#fff" stroke="#fff" strokeWidth="2" strokeLinejoin="round" />
            <path d="M-6 -3V-8Q-6 -14 0 -14T6 -8V-3" fill="none" stroke="#fff" strokeWidth="3" />
            <path d="M-8 5Q0 15 8 5" fill="none" stroke="#4f90f5" strokeWidth="3" strokeLinecap="round" />
        </g>
    );
}

function LocationMap() {
    return (
        <svg viewBox="0 0 953 521" className="block h-auto w-full rounded-[32px] bg-[#232e3c]" role="img" aria-label="El Poblado">
            <g fill="none" stroke="#37414d" strokeLinecap="round" strokeLinejoin="round">
                <g transform="translate(-75 -33) scale(0.3571 0.4209)">
                    <Roads paths={westRoads} width="7" />
                    <Roads paths={westAvenues} width="10" />
                    <path d="M310 490L500 520L640 570L830 625M880 670L1050 715L1300 800L1568 885" strokeWidth="16" vectorEffect="non-scaling-stroke" />
                    <path d="M440 490L520 515L680 565" strokeWidth="22" vectorEffect="non-scaling-stroke" />
                </g>
                <g transform="translate(465 -33) scale(0.4209)">
                    <Roads paths={eastRoads} width="8" />
                    <Roads paths={eastAvenues} width="18" />
                    <Roads paths={eastHighways} width="20" />
                    <path d="M575 470L560 560L500 740L430 840" strokeWidth="28" vectorEffect="non-scaling-stroke" />
                </g>
            </g>
            <g transform="translate(-75 -33) scale(0.3571 0.4209)">
                <path d="M845 78H910L915 180L945 340L925 470L850 700L735 1010L565 1270L515 1240L665 1030L775 755L880 400L885 350L862 210Z" fill="#736753" />
            </g>

            <g stroke="#232e3c" strokeWidth="5" strokeLinejoin="round" className="[paint-order:stroke]" fontSize="42" fontWeight="500">
                <g fill="#766a55" className="tracking-widest">
                    <text x="1" y="70">NITO</text>
                    <text x="212" y="444">ALEJANDRIA</text>
                    <text x="626" y="93">LA FLORIDA</text>
                </g>
                <g fill="#cf9565">
                    <text x="251" y="171" textAnchor="end">ernando Plaza</text>
                    <text x="126" y="247" fontSize="30" className="tracking-widest">EL POBLADO</text>
                    <text x="80" y="347" textAnchor="end" fontWeight="400">telar</text>
                    <text x="80" y="389" textAnchor="end" fontWeight="400">Oro</text>
                    <text x="597" y="204" fontWeight="400">Mall Piazza Bella</text>
                    <text x="909" y="346">An</text>
                    <text x="139" y="543">Centro Comercial Río Sur</text>
                </g>
                <g fill="#9ca6b4" fontSize="32">
                    <text transform="translate(277 36) rotate(-10)">Calle 7</text>
                    <text transform="translate(604 476) rotate(-69)" fontSize="36">Carrera 34</text>
                    <text transform="translate(692 536) rotate(-58)" fontSize="34">22</text>
                    <text transform="translate(922 508) rotate(10)" fontSize="30">Ca</text>
                </g>
            </g>

            <ShopPin x={289} y={142} />
            <ShopPin x={951} y={175} />
            <ShopPin x={-11} y={480} />
            <ShopPin x={101} y={518} />
            <path d="M653 0H667L662 11Q660 14 658 11Z" fill="#f0507f" />

            <g transform="translate(118 340)">
                <path d="M0 56Q-4 56 -5 50Q-8 38 -21 22A30 30 0 1 1 21 22Q8 38 5 50Q4 56 0 56Z" fill="#f1608f" />
                <path d="M-18 -10V12M18 -6V12M-18 6H18" stroke="#fff" strokeWidth="4" />
                <circle cx="-9" cy="-2" r="5" fill="#fff" />
                <path d="M-4 4V-6H6Q15 -6 17 1V5H-4Z" fill="#fff" />
            </g>

            <defs>
                <linearGradient id="marker" x1="0" y1="0" x2="0" y2="1">
                    <stop offset="0" stopColor="#ff6480" />
                    <stop offset="1" stopColor="#fb4f45" />
                </linearGradient>
            </defs>
            <path d="M472 263Q465 250 452 236Q439 215 439 200A33 33 0 0 1 505 200Q505 215 492 236Q479 250 472 263Z" fill="url(#marker)" stroke="#c43c38" strokeWidth="2" />
            <circle cx="472" cy="200" r="12" fill="#5c0e0c" />

            <text x="25" y="470" fill="#fff" stroke="#0d1116" strokeOpacity="0.9" strokeWidth="16" strokeLinejoin="round" fontSize="65" className="font-[Lato,sans-serif] font-semibold [paint-order:stroke]">
                Google
            </text>
        </svg>
    );
}

/* ---------- Icons ---------- */

function StatusBar() {
    return (
        <div className="flex h-[125px] items-center justify-between pr-[57px] pl-[58px] text-[#eceff1]">
            <div className="flex items-center">
                <span className="text-[52px] leading-none">5:50</span>
                <svg className="ml-6 w-[39px]" viewBox="0 0 39 39">
                    <path fill="currentColor" fillRule="evenodd" d="M7 0H32Q39 0 39 7V32Q39 39 32 39H7Q0 39 0 32V7Q0 0 7 0ZM12 8A4 4 0 1 0 12 16A4 4 0 1 0 12 8ZM4 27L12 22L17 27L29 17L35 25V33Q35 35 33 35H6Q4 35 4 33Z" />
                </svg>
                <svg className="ml-[21px] w-[45px]" viewBox="0 0 45 42">
                    <path fill="currentColor" d="M9 16L15 2Q17 -1 22 2Q28 -1 30 2L36 16ZM0 19H45V22H0Z" />
                    <g fill="none" stroke="currentColor" strokeWidth="3">
                        <circle cx="11" cy="33" r="7" />
                        <circle cx="34" cy="33" r="7" />
                        <path d="M18 32Q22 29 27 32" />
                    </g>
                </svg>
                <svg className="ml-4 w-[49px]" viewBox="0 0 49 40">
                    <path fill="currentColor" d="M3 0H42Q45 0 45 3V19H34L31 23V40H3Q0 40 0 37V3Q0 0 3 0Z" />
                    <g fill="none" stroke="#1f2c34" strokeWidth="4">
                        <circle cx="14" cy="19" r="6" />
                        <circle cx="31" cy="19" r="6" />
                        <path d="M14 25H31" />
                    </g>
                    <path fill="currentColor" stroke="#1f2c34" strokeWidth="2" d="M37 22H46L50 26V41H33V26Z" />
                    <path d="M38 29L41 26V36" fill="none" stroke="#1f2c34" strokeWidth="3" />
                </svg>
                <span className="ml-8 size-4 rounded-full bg-current" />
            </div>
            <div className="flex items-center">
                <svg className="w-[39px]" viewBox="0 0 39 39">
                    <path fill="currentColor" d="M3 12H7L1 3L4 1L27 22V36Q27 40 24 37L12 27H4Q0 27 0 23V15Q0 12 3 12ZM16 8L23 1Q27 -1 27 3V18Z" />
                    <path fill="none" stroke="currentColor" strokeWidth="3" strokeLinecap="round" strokeLinejoin="round" d="M37 2L33 6L37 12L33 18L37 24L33 30L37 36" />
                </svg>
                <svg className="ml-5 w-[58px]" viewBox="0 0 58 43">
                    <g fill="none" stroke="currentColor" strokeWidth="4" strokeLinecap="round">
                        <path d="M2 12Q24 -8 47 12M9 20Q24 6 40 20M16 27Q24 19 32 27" />
                        <path strokeWidth="3" strokeLinejoin="round" d="M38 29V41M33 37L38 42L43 37M51 39V25M46 30L51 25L56 30" />
                    </g>
                    <circle cx="24" cy="34" r="3" fill="currentColor" />
                </svg>
                <svg className="ml-3 w-[37px]" viewBox="0 0 37 40">
                    <rect y="30" width="5" height="10" rx="2" fill="currentColor" />
                    <g fill="#6c7579">
                        <rect x="10" y="20" width="5" height="20" rx="2" />
                        <rect x="21" y="10" width="5" height="30" rx="2" />
                        <rect x="31" width="5" height="40" rx="2" />
                    </g>
                </svg>
                <span className="ml-5 text-[52px] leading-none">47%</span>
                <svg className="ml-2 w-[28px]" viewBox="0 0 28 43">
                    <path fill="#6c7579" d="M10 0H18Q21 0 21 4V6H24Q28 6 28 11V26H0V11Q0 6 4 6H7V4Q7 0 10 0Z" />
                    <path fill="currentColor" d="M0 26H28V38Q28 43 23 43H5Q0 43 0 38Z" />
                </svg>
            </div>
        </div>
    );
}

function Header() {
    return (
        <header className="bg-[#1f2c34]">
            <StatusBar />
            <div className="flex items-center pt-[14px] pr-[75px] pb-10 pl-[31px]">
                <button aria-label="Back" className="mr-[15px] text-white">
                    <svg className="w-[61px]" viewBox="0 0 61 61" fill="none" stroke="currentColor" strokeWidth="8">
                        <path d="M34 3L5 30.500L34 58M5 30.500H61" />
                    </svg>
                </button>
                <svg className="w-[131px]" viewBox="0 0 131 131">
                    <circle cx="65.500" cy="65.500" r="65.500" fill="#637783" />
                    <circle cx="65.500" cy="57" r="22" fill="#cfd8df" />
                    <path d="M23 112Q33 88 58 88H73Q98 88 108 112A63 63 0 0 1 23 112Z" fill="#cfd8df" />
                </svg>
                <h1 className="ml-8 flex-1 text-[68px] leading-none font-medium whitespace-nowrap text-[#e9edef]">+57 314 3852246</h1>
                <div className="flex items-center pt-1 text-white">
                    <button aria-label="Video call">
                        <svg className="w-[76px]" viewBox="0 0 76 50" fill="currentColor">
                            <rect width="55" height="50" rx="9" />
                            <path d="M59 17Q59 14 61 13L70 7Q76 5 76 10V40Q76 45 70 43L61 37Q59 36 59 33Z" />
                        </svg>
                    </button>
                    <button aria-label="Call" className="ml-[110px]">
                        <svg className="w-[65px]" viewBox="0 0 65 65" fill="currentColor">
                            <path d="M8 0H14Q20 1 21 8L22 16Q21 21 18 24L14 27Q20 43 37 51L41 46Q44 42 49 43L58 44Q64 46 64 52V58Q63 64 56 64Q34 63 16 42Q1 24 0 8Q1 1 8 0Z" />
                        </svg>
                    </button>
                    <button aria-label="More options" className="ml-[118px] flex flex-col gap-2">
                        <span className="size-[15px] rounded-full bg-current" />
                        <span className="size-[15px] rounded-full bg-current" />
                        <span className="size-[15px] rounded-full bg-current" />
                    </button>
                </div>
            </div>
        </header>
    );
}

function ReadTicks() {
    return (
        <svg className="w-[60px]" viewBox="0 0 60 38" fill="none" stroke="#53bdeb" strokeWidth="5" strokeLinecap="round" strokeLinejoin="round" aria-label="Read">
            <path d="M3 25L14 35L39 3M29 29L33 35L57 3" />
        </svg>
    );
}

/* ---------- Messages ---------- */

function Tail({ mine }) {
    return mine ? (
        <svg className="absolute top-0 left-full -ml-px w-[28px]" viewBox="0 0 28 42" fill="#005d4b">
            <path d="M0 0H21Q28 1 27 8Q26 11 23 14L0 42Z" />
        </svg>
    ) : (
        <svg className="absolute top-0 right-full -mr-px w-[28px]" viewBox="0 0 28 42" fill="#1f2c34">
            <path d="M28 0H7Q0 1 1 8Q2 11 5 14L28 42Z" />
        </svg>
    );
}

function Bubble({ mine, first, children }) {
    return (
        <div
            className={`relative max-w-[1170px] rounded-[45px] shadow-[0_2px_3px_rgba(0,0,0,0.35)] ${
                mine ? 'bg-[#005d4b]' : 'bg-[#1f2c34]'
            } ${first ? (mine ? 'rounded-tr-none' : 'rounded-tl-none') : ''}`}
        >
            {first && <Tail mine={mine} />}
            {children}
        </div>
    );
}

function TextMessage({ mine, first, text, time, quote }) {
    return (
        <li className={`flex ${mine ? 'justify-end' : ''} ${first ? 'mt-[38px]' : 'mt-[10px]'}`}>
            <Bubble mine={mine} first={first}>
                {quote && (
                    <div className="px-[15px] pt-[15px]">
                        <blockquote className="h-[180px] overflow-hidden rounded-[32px] bg-[#1e2a30]">
                            <div className="h-full border-l-[15px] border-[#06916f] pt-[22px] pl-[30px] text-[53px] leading-[71px]">
                                <p className="font-medium text-[#06916f]">{quote.author}</p>
                                <p className="text-[#82929c]">{quote.text}</p>
                            </div>
                        </blockquote>
                    </div>
                )}
                <div className="flow-root pt-[23px] pr-[34px] pb-[29px] pl-[38px] text-[60px] leading-[71px] text-[#e9edef]">
                    {text}
                    <span
                        className={`float-right mt-[34px] mb-[-15px] flex items-center gap-4 text-[44px] leading-[52px] ${
                            mine ? 'ml-8 text-[#8fbbb1]' : 'ml-14 text-[#8696a0]'
                        }`}
                    >
                        <time>{time}</time>
                        {mine && <ReadTicks />}
                    </span>
                </div>
            </Bubble>
        </li>
    );
}

function MapMessage({ time }) {
    return (
        <li className="flex items-center">
            <Bubble first>
                <div className="w-[983px] px-[15px] pt-[15px] pb-[14px]">
                    <LocationMap />
                    <p className="mt-[29px] pr-4 text-right text-[44px] leading-[52px] text-[#8696a0]">
                        <time>{time}</time>
                    </p>
                </div>
            </Bubble>
            <button aria-label="Forward" className="ml-7 flex size-[124px] items-center justify-center rounded-full bg-[#0b1117]/80 pb-2 text-white">
                <svg className="w-[75px]" viewBox="0 0 75 58" fill="currentColor">
                    <path d="M2 56Q10 16 45 14V5Q46 -1 51 2L73 25Q75 27 73 29L51 50Q46 54 45 48V38Q18 37 5 55Q2 59 2 56Z" />
                </svg>
            </button>
        </li>
    );
}

const messages = [
    { id: 1, mine: true, first: true, text: 'ya se donde es', time: '5:27 PM' },
    { id: 2, mine: false, first: true, text: 'Nequi daviplata bancolombia', time: '5:28 PM' },
    { id: 3, mine: true, first: true, text: 'como te consigno? o es cuando llegue allá?', time: '5:28 PM' },
    { id: 4, mine: true, text: 'como es adelantando?', time: '5:28 PM' },
    { id: 5, mine: true, text: 'o sea para tu darme el número del apto tendría que consignarte?', time: '5:28 PM' },
    { id: 6, mine: true, text: 'o cusndo llegue?', time: '5:29 PM' },
    {
        id: 7, mine: false, first: true, text: 'Por medio de nequi daviplta o bancolombia', time: '5:29 PM',
        quote: { author: 'You', text: 'como es adelantando?' },
    },
    { id: 8, mine: true, first: true, text: 'si', time: '5:29 PM' },
    { id: 9, mine: true, text: 'claro', time: '5:29 PM' },
];

function Composer() {
    const [draft, setDraft] = useState('');

    return (
        <form onSubmit={(e) => e.preventDefault()} className="mt-3 flex items-center gap-[18px] pr-4 pb-4 pl-[18px]">
            <div className="flex h-[173px] min-w-0 flex-1 items-center rounded-full bg-[#1f2c34] pr-[53px] pl-[43px] text-[#8696a0]">
                <button type="button" aria-label="Emoji">
                    <svg className="w-[76px]" viewBox="0 0 76 76">
                        <circle cx="38" cy="38" r="38" fill="currentColor" />
                        <g fill="#1f2c34">
                            <ellipse cx="26" cy="28" rx="6" ry="8" />
                            <ellipse cx="50" cy="28" rx="6" ry="8" />
                            <path d="M13 41Q38 45 62 41C60 56 51 64 37.500 64S15 56 13 41Z" />
                        </g>
                        <path d="M18 47Q38 50 57 47Q51 54 37.500 54T18 47Z" fill="currentColor" />
                    </svg>
                </button>
                <span className="ml-[43px] h-[91px] w-2 bg-[#00a884]" />
                <input
                    type="text"
                    aria-label="Message"
                    placeholder="Message"
                    value={draft}
                    onChange={(e) => setDraft(e.target.value)}
                    className="relative -ml-2 h-[91px] min-w-0 flex-1 bg-transparent pt-1 text-[68px] text-[#e9edef] outline-none placeholder:text-[#8696a0]"
                />
                <button type="button" aria-label="Attach">
                    <svg className="w-[79px]" viewBox="0 0 79 71" fill="none" stroke="currentColor" strokeWidth="7" strokeLinecap="round">
                        <path d="M42 7L68 34Q80 48 69 61Q55 73 40 61L8 29Q0 19 8 9Q18 0 29 9L56 36Q60 44 54 49Q48 52 43 46L24 25" />
                    </svg>
                </button>
                <button type="button" aria-label="Camera" className="ml-[87px] pb-1">
                    <svg className="w-[76px]" viewBox="0 0 76 70">
                        <path fill="currentColor" d="M13 10Q20 10 22 6Q26 0 31 0H45Q50 0 54 6Q56 10 63 10Q76 10 76 23V56Q76 70 62 70H14Q0 70 0 56V23Q0 10 13 10Z" />
                        <circle cx="38" cy="37" r="16" fill="none" stroke="#1f2c34" strokeWidth="6" />
                    </svg>
                </button>
            </div>
            <button type="button" aria-label="Record voice message" className="flex size-[176px] items-center justify-center rounded-full bg-[#00a884] text-white">
                <svg className="w-[55px]" viewBox="0 0 55 77">
                    <rect x="16" width="23" height="46" rx="11.500" fill="currentColor" />
                    <path d="M4 38A23.500 23.500 0 0 0 51 38M27.500 60V73" fill="none" stroke="currentColor" strokeWidth="7" strokeLinecap="round" />
                </svg>
            </button>
        </form>
    );
}

function NavigationBar() {
    return (
        <nav className="flex min-h-[180px] flex-1 items-center justify-between bg-[#091117] pt-[6px] pr-[293px] pl-[297px] text-[#b4b7ba]">
            <button aria-label="Recent apps" className="flex gap-4">
                <span className="h-[63px] w-2 rounded-full bg-current" />
                <span className="h-[63px] w-2 rounded-full bg-current" />
                <span className="h-[63px] w-2 rounded-full bg-current" />
            </button>
            <button aria-label="Home" className="size-[66px] rounded-[22px] border-8 border-current" />
            <button aria-label="Back" className="pl-[10px]">
                <svg className="w-[36px]" viewBox="0 0 36 64" fill="none" stroke="currentColor" strokeWidth="8" strokeLinecap="round">
                    <path d="M32 4L6 32L32 60" />
                </svg>
            </button>
        </nav>
    );
}

export default function App() {
    return (
        <div className="flex min-h-screen flex-col bg-[#091117] font-[Roboto,sans-serif]">
            <Header />
            <main className="relative isolate overflow-hidden bg-[#071319]">
                <Wallpaper />
                <ul className="px-[60px] pt-[18px]">
                    <MapMessage time="5:27 PM" />
                    {messages.map((message) => <TextMessage key={message.id} {...message} />)}
                </ul>
                <button
                    aria-label="Scroll to bottom"
                    className="absolute right-[46px] bottom-[265px] flex size-[120px] items-center justify-center rounded-full bg-[#28343b] pt-3 text-[#8696a0] shadow-[0_4px_8px_rgba(0,0,0,0.3)]"
                >
                    <svg className="w-[46px]" viewBox="0 0 46 42" fill="none" stroke="currentColor" strokeWidth="5">
                        <path d="M2 3L23 20L44 3M2 22L23 39L44 22" />
                    </svg>
                </button>
                <Composer />
            </main>
            <NavigationBar />
        </div>
    );
}
